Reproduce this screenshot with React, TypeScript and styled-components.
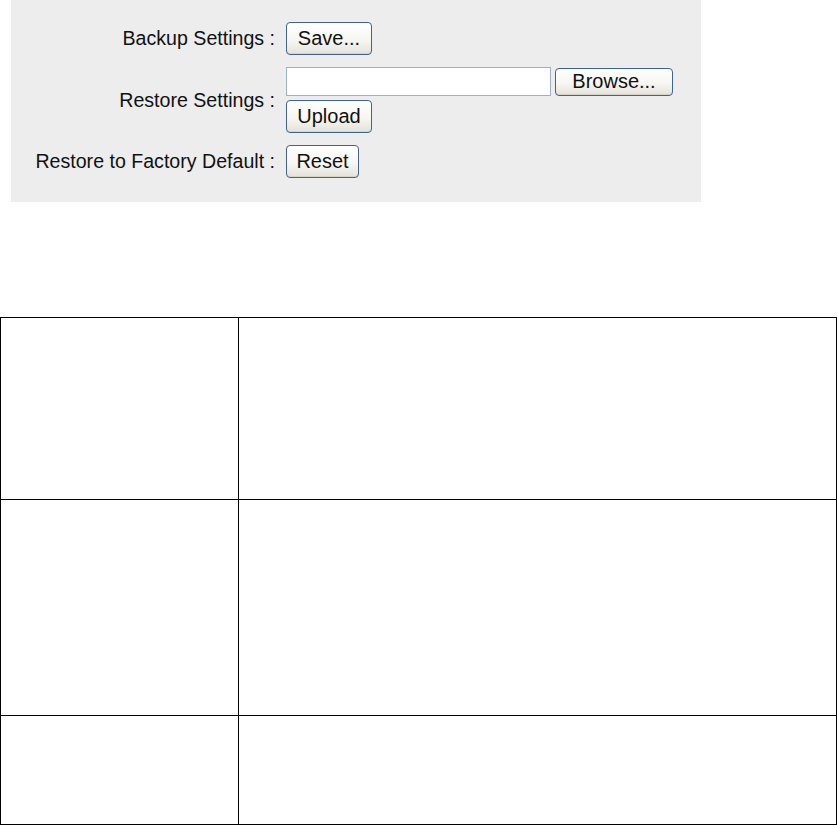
import React from "react";
import styled, { createGlobalStyle } from "styled-components";

const GlobalStyle = createGlobalStyle`
  html, body {
    margin: 0;
    padding: 0;
    background: #fff;
  }
  body {
    font-family: "Liberation Sans", Arial, sans-serif;
  }
`;

const Page = styled.div`
  width: 837px;
  min-height: 825px;
`;

const Panel = styled.div`
  margin-left: 11px;
  width: 690px;
  height: 202px;
  box-sizing: border-box;
  background: #ededed;
  padding: 22px 0 0 0;
  display: grid;
  grid-template-columns: 264px auto;
  column-gap: 11px;
  row-gap: 12px;
  align-content: start;
`;

const Label = styled.div`
  align-self: center;
  text-align: right;
  font-size: 19.6px;
  color: #111;
  white-space: nowrap;
`;

const Controls = styled.div`
  display: flex;
  flex-direction: column;
  align-items: flex-start;
  gap: 4px;
`;

const InlineRow = styled.div`
  display: flex;
  align-items: center;
  gap: 4px;
`;

const Button = styled.button<{ $w: number; $h?: number }>`
  width: ${(p) => p.$w}px;
  height: ${(p) => p.$h ?? 33}px;
  box-sizing: border-box;
  margin: 0;
  padding: 0 0 1px;
  border: 1px solid #3f6491;
  border-radius: 4px;
  background: linear-gradient(#ffffff 0%, #f7f6f2 55%, #e4e2da 100%);
  box-shadow: inset 0 -1px 0 #d6d3c8;
  font-family: "Liberation Sans", Arial, sans-serif;
  font-size: 20px;
  color: #111;
  line-height: 1;
`;

const FileInput = styled.div`
  width: 265px;
  height: 29px;
  box-sizing: border-box;
  border: 1px solid #9ab2cf;
  background: #fff;
`;

const Table = styled.div`
  margin-top: 115px;
  width: 837px;
  border-top: 1px solid #000;
  border-left: 1px solid #000;
  box-sizing: border-box;
`;

const Row = styled.div<{ $h: number }>`
  display: flex;
  height: ${(p) => p.$h}px;
  border-bottom: 1px solid #000;
  box-sizing: border-box;
`;

const Cell = styled.div<{ $w?: number }>`
  flex: ${(p) => (p.$w ? `0 0 ${p.$w}px` : "1")};
  border-right: 1px solid #000;
  box-sizing: border-box;
  background: #fff;
`;

export default function App() {
  return (
    <Page>
      <GlobalStyle />
      <Panel>
        <Label>Backup Settings :</Label>
        <Controls>
          <Button $w={86}>Save...</Button>
        </Controls>

        <Label>Restore Settings :</Label>
        <Controls>
          <InlineRow>
            <FileInput />
            <Button $w={118} $h={28}>
              Browse...
            </Button>
          </InlineRow>
          <Button $w={86}>Upload</Button>
        </Controls>

        <Label>Restore to Factory Default :</Label>
        <Controls>
          <Button $w={73}>Reset</Button>
        </Controls>
      </Panel>

      <Table>
        <Row $h={182}>
          <Cell $w={238} />
          <Cell />
        </Row>
        <Row $h={216}>
          <Cell $w={238} />
          <Cell />
        </Row>
        <Row $h={109}>
          <Cell $w={238} />
          <Cell />
        </Row>
      </Table>
    </Page>
  );
}
